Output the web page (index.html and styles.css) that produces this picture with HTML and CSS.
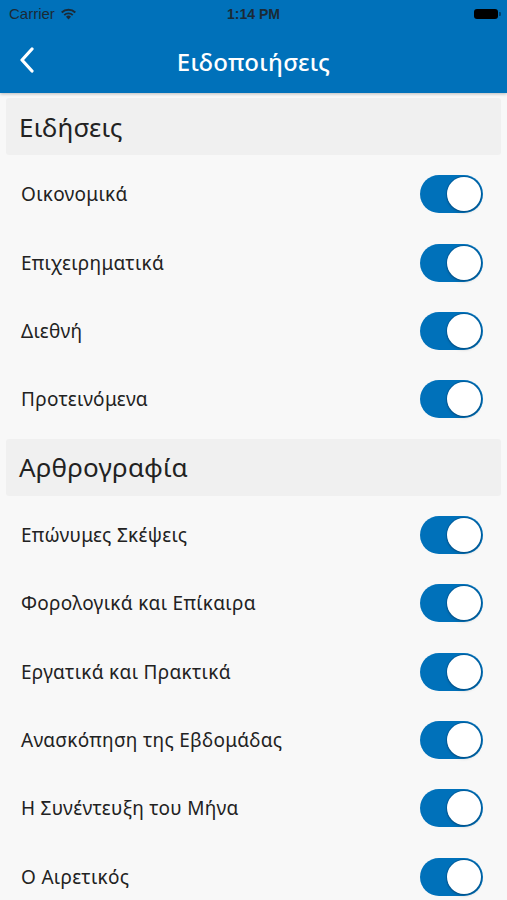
FILE: index.html
```html
<!DOCTYPE html>
<html lang="el">
<head>
    <meta charset="UTF-8">
    <title>Ειδοποιήσεις</title>
    <link rel="stylesheet" href="styles.css">
</head>
<body>
<div class="top">
    <div class="status">
        <span class="carrier">Carrier
            <svg class="wifi" width="17" height="12" viewBox="0 0 17 12">
                <path d="M8.5 11.5 L6 8.8 A3.6 3.6 0 0 1 11 8.8 Z" fill="#1b2a36"/>
                <path d="M3.6 6.4 A7 7 0 0 1 13.4 6.4 L12.1 7.8 A5.2 5.2 0 0 0 4.9 7.8 Z" fill="#1b2a36"/>
                <path d="M1 3.8 A10.8 10.8 0 0 1 16 3.8 L14.6 5.2 A8.8 8.8 0 0 0 2.4 5.2 Z" fill="#1b2a36"/>
            </svg>
        </span>
        <span class="time">1:14 PM</span>
        <span class="battery"><i></i></span>
    </div>
    <div class="nav">
        <a href="#" class="back">
            <svg width="16" height="26" viewBox="0 0 16 26">
                <path d="M13 2 L3 13 L13 24" fill="none" stroke="#fff" stroke-width="3.2" stroke-linecap="round" stroke-linejoin="round"/>
            </svg>
        </a>
        <h1>Ειδοποιήσεις</h1>
    </div>
</div>

<div class="content">
    <h2 class="section">Ειδήσεις</h2>
    <ul class="list">
        <li><span>Οικονομικά</span><b class="switch on"></b></li>
        <li><span>Επιχειρηματικά</span><b class="switch on"></b></li>
        <li><span>Διεθνή</span><b class="switch on"></b></li>
        <li><span>Προτεινόμενα</span><b class="switch on"></b></li>
    </ul>
    <h2 class="section">Αρθρογραφία</h2>
    <ul class="list">
        <li><span>Επώνυμες Σκέψεις</span><b class="switch on"></b></li>
        <li><span>Φορολογικά και Επίκαιρα</span><b class="switch on"></b></li>
        <li><span>Εργατικά και Πρακτικά</span><b class="switch on"></b></li>
        <li><span>Ανασκόπηση της Εβδομάδας</span><b class="switch on"></b></li>
        <li><span>Η Συνέντευξη του Μήνα</span><b class="switch on"></b></li>
        <li><span>Ο Αιρετικός</span><b class="switch on"></b></li>
    </ul>
</div>
</body>
</html>
```

FILE: styles.css
```css
*{
    margin: 0;
    padding: 0;
    list-style: none;
    box-sizing: border-box;
}
html{
    font-family: "Noto Sans", Roboto, sans-serif;
}
body{
    background: #f8f8f8;
    height: 900px;
    overflow: hidden;
}
.top{
    background: #0071ba;
    box-shadow: 0 1px 3px rgba(0,0,0,0.25);
    position: relative;
    z-index: 2;
}
.status{
    height: 27px;
    display: flex;
    align-items: center;
    justify-content: space-between;
    padding: 0 9px;
    color: #1b2a36;
    font: 500 15px/1 "Liberation Sans", sans-serif;
}
.status .carrier{
    display: flex;
    align-items: center;
    gap: 5px;
    width: 120px;
}
.status .time{
    font-weight: bold;
    font-size: 14px;
}
.status .battery{
    width: 120px;
    display: flex;
    justify-content: flex-end;
}
.status .battery i{
    display: block;
    width: 24px;
    height: 10px;
    background: #000;
    border-radius: 3px;
    position: relative;
}
.status .battery i:after{
    content: '';
    position: absolute;
    right: -3px;
    top: 3px;
    width: 2px;
    height: 4px;
    background: rgba(0,0,0,0.4);
    border-radius: 0 1px 1px 0;
}
.nav{
    height: 66px;
    display: flex;
    align-items: center;
    justify-content: center;
    position: relative;
}
.nav .back{
    position: absolute;
    left: 19px;
    top: 20px;
}
.nav h1{
    color: #fff;
    font-size: 24px;
    font-weight: 500;
    letter-spacing: 0.3px;
    margin-top: 2px;
}
.content{
    padding: 5px 6px 0;
}
.section{
    height: 57px;
    background: #f0f0f0;
    border-radius: 3px;
    font-size: 26px;
    font-weight: normal;
    letter-spacing: 0.2px;
    color: #222;
    padding-left: 13px;
    display: flex;
    align-items: center;
    margin-bottom: 5px;
}
.list{
    margin-bottom: 5px;
}
.list li{
    height: 68.4px;
    display: flex;
    align-items: center;
    justify-content: space-between;
    padding: 0 18px 0 15px;
    font-size: 19px;
    letter-spacing: 0.3px;
    color: #222;
}
.switch{
    width: 63px;
    height: 38px;
    border-radius: 19px;
    background: #0071ba;
    position: relative;
}
.switch:after{
    content: '';
    position: absolute;
    right: 2px;
    top: 2px;
    width: 34px;
    height: 34px;
    border-radius: 50%;
    background: #fff;
    box-shadow: 0 0 0 1px rgba(0,40,80,0.25), 0 2px 3px rgba(0,0,0,0.15);
}
```
